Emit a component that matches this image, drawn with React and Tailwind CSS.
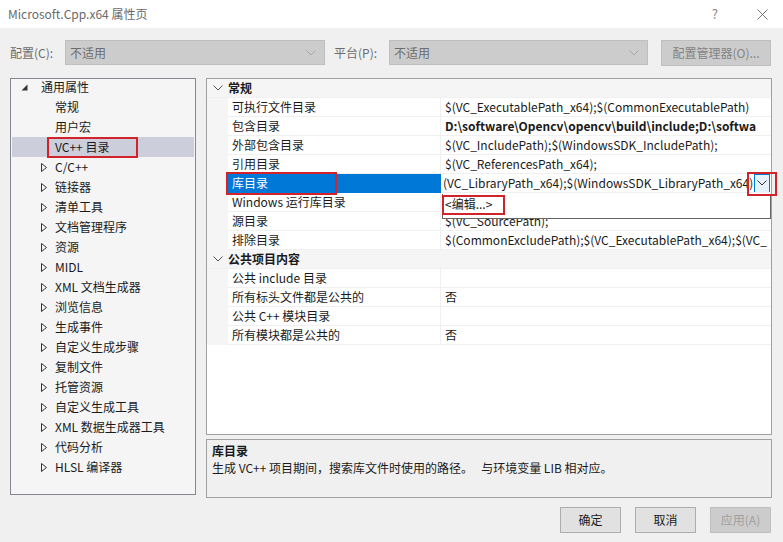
import React from 'react'

const font = { fontFamily: '"Noto Sans CJK SC", "Noto Sans", sans-serif' }

const treeItems = [
  { label: '通用属性', level: 0, open: true },
  { label: '常规', level: 1 },
  { label: '用户宏', level: 1 },
  { label: 'VC++ 目录', level: 1, selected: true },
  { label: 'C/C++' },
  { label: '链接器' },
  { label: '清单工具' },
  { label: '文档管理程序' },
  { label: '资源' },
  { label: 'MIDL' },
  { label: 'XML 文档生成器' },
  { label: '浏览信息' },
  { label: '生成事件' },
  { label: '自定义生成步骤' },
  { label: '复制文件' },
  { label: '托管资源' },
  { label: '自定义生成工具' },
  { label: 'XML 数据生成器工具' },
  { label: '代码分析' },
  { label: 'HLSL 编译器' },
]

// value of the row under the popup is hidden in the screenshot
const rows = [
  { header: '常规' },
  { name: '可执行文件目录', value: '$(VC_ExecutablePath_x64);$(CommonExecutablePath)' },
  { name: '包含目录', value: 'D:\\software\\Opencv\\opencv\\build\\include;D:\\softwa', bold: true },
  { name: '外部包含目录', value: '$(VC_IncludePath);$(WindowsSDK_IncludePath);' },
  { name: '引用目录', value: '$(VC_ReferencesPath_x64);' },
  { name: '库目录', value: '(VC_LibraryPath_x64);$(WindowsSDK_LibraryPath_x64)', selected: true },
  { name: 'Windows 运行库目录', value: '' },
  { name: '源目录', value: '$(VC_SourcePath);' },
  { name: '排除目录', value: '$(CommonExcludePath);$(VC_ExecutablePath_x64);$(VC_' },
  { header: '公共项目内容' },
  { name: '公共 include 目录', value: '' },
  { name: '所有标头文件都是公共的', value: '否' },
  { name: '公共 C++ 模块目录', value: '' },
  { name: '所有模块都是公共的', value: '否' },
]

function Chevron({ className }) {
  return (
    <svg className={className} width="10" height="6" viewBox="0 0 10 6" fill="none" stroke="currentColor" strokeWidth="1">
      <path d="M0.5 0.5 L5 5 L9.5 0.5" />
    </svg>
  )
}

function Combo({ width, text }) {
  return (
    <div className={`h-[25px] ${width} bg-[#cccccc] border border-[#bfbfbf] flex items-center justify-between pl-[4px] pr-[8px] text-[#6d6d6d]`}>
      <span>{text}</span>
      <Chevron className="text-[#a8a8a8]" />
    </div>
  )
}

function TreeRow({ item }) {
  return (
    <div className={`h-[20px] flex items-center mx-[1px] ${item.selected ? 'bg-[#cccedb]' : ''}`}>
      {item.level === 0 ? (
        <>
          <svg className="ml-[9px]" width="7" height="7" viewBox="0 0 7 7"><path d="M6.5 0.5 L6.5 6.5 L0.5 6.5 Z" fill="#333" /></svg>
          <span className="ml-[13px]">{item.label}</span>
        </>
      ) : item.level === 1 ? (
        <span className="ml-[43px]">{item.label}</span>
      ) : (
        <>
          <svg className="ml-[29px]" width="6" height="9" viewBox="0 0 6 9"><path d="M0.5 0.5 L5.5 4.5 L0.5 8.5 Z" fill="none" stroke="#333" /></svg>
          <span className="ml-[8px]">{item.label}</span>
        </>
      )}
    </div>
  )
}

function GridRow({ row }) {
  if (row.header) {
    return (
      <div className="h-[19px] flex items-center bg-[#f5f5f5] border-b border-[#f0f0f0]">
        <Chevron className="ml-[6px] text-[#555]" />
        <span className="ml-[5px] font-bold">{row.header}</span>
      </div>
    )
  }
  return (
    <div className="h-[19px] flex">
      <div className="w-[21px] shrink-0 bg-[#f5f5f5]" />
      <div className={`w-[213px] shrink-0 flex items-center pl-[4px] border-b border-r ${row.selected ? 'bg-[#0078d7] text-white border-[#0078d7]' : 'bg-white border-[#f0f0f0]'}`}>
        {row.name}
      </div>
      <div className="flex-1 min-w-0 flex items-center bg-white border-b border-[#f0f0f0] overflow-hidden">
        <span className={`whitespace-nowrap ${row.bold ? 'font-bold' : ''} ${row.selected ? 'pl-[2px]' : 'pl-[4px]'}`}>{row.value}</span>
        {row.selected && (
          <div className="ml-auto mr-[1px] w-[16px] h-[19px] shrink-0 bg-[#e5f1fb] border border-[#0078d7] flex items-center justify-center text-[#333]">
            <Chevron />
          </div>
        )}
      </div>
    </div>
  )
}

export default function App() {
  return (
    <div className="relative w-[783px] h-[542px] bg-[#f0f0f0] text-[12px] leading-[16px] text-[#1a1a1a] overflow-hidden" style={font}>
      {/* title bar */}
      <div className="h-[28px] bg-white flex items-center pl-[8px] text-[#6a6a6a] text-[12px]">
        <span>Microsoft.Cpp.x64 属性页</span>
        <span className="ml-auto mr-[39px] text-[#888] text-[13px]">?</span>
        <svg className="mr-[15px]" width="11" height="11" viewBox="0 0 11 11" stroke="#777" strokeWidth="1"><path d="M0.5 0.5 L10.5 10.5 M10.5 0.5 L0.5 10.5" /></svg>
      </div>

      {/* config row */}
      <div className="flex items-center h-[25px] mt-[12px] pl-[10px]">
        <span className="w-[55px] text-[#6d6d6d]">配置(C):</span>
        <Combo width="w-[260px]" text="不适用" />
        <span className="ml-[9px] w-[55px] text-[#6d6d6d]">平台(P):</span>
        <Combo width="w-[259px]" text="不适用" />
        <div className="ml-[13px] w-[110px] h-[26px] bg-[#cccccc] border border-[#bfbfbf] flex items-center justify-center text-[#838383]">
          配置管理器(O)...
        </div>
      </div>

      {/* main */}
      <div className="flex mt-[13px] pl-[10px]">
        <div className="w-[186px] h-[417px] border border-[#828790] bg-[#f5f5f5] overflow-hidden">
          <div className="-mt-[2px]">
            {treeItems.map((it) => <TreeRow key={it.label} item={it} />)}
          </div>
        </div>

        <div className="ml-[10px] w-[566px] flex flex-col gap-[4px]">
          <div className="relative h-[357px] border border-[#a0a0a0] bg-white">
            {rows.map((r, i) => <GridRow key={i} row={r} />)}
            {/* dropdown popup */}
            <div className="absolute left-[235px] top-[115px] w-[329px] h-[25px] bg-white border border-[#646464] border-t-0 flex items-start pt-[2px] pl-[2px]">
              <span>&lt;编辑...&gt;</span>
            </div>
          </div>
          <div className="h-[59px] border border-[#a0a0a0] bg-[#f0f0f0] px-[5px] pt-[3px]">
            <div className="font-bold">库目录</div>
            <div className="mt-[1px] whitespace-pre">生成 VC++ 项目期间，搜索库文件时使用的路径。   与环境变量 LIB 相对应。</div>
          </div>
        </div>
      </div>

      {/* buttons */}
      <div className="flex justify-end gap-[14px] pr-[12px] mt-[9px]">
        <div className="w-[61px] h-[26px] bg-[#e1e1e1] border border-[#adadad] flex items-center justify-center">确定</div>
        <div className="w-[61px] h-[26px] bg-[#e1e1e1] border border-[#adadad] flex items-center justify-center">取消</div>
        <div className="w-[61px] h-[26px] bg-[#cccccc] border border-[#bfbfbf] flex items-center justify-center text-[#a0a0a0]">应用(A)</div>
      </div>

      {/* red annotation boxes */}
      <div className="absolute left-[47px] top-[137px] w-[91px] h-[21px] border-2 border-[#d2232a]" />
      <div className="absolute left-[226px] top-[172px] w-[111px] h-[23px] border-2 border-[#d2232a]" />
      <div className="absolute left-[747px] top-[172px] w-[30px] h-[24px] border-2 border-[#d2232a]" />
      <div className="absolute left-[442px] top-[195px] w-[63px] h-[20px] border-2 border-[#d2232a]" />
    </div>
  )
}
